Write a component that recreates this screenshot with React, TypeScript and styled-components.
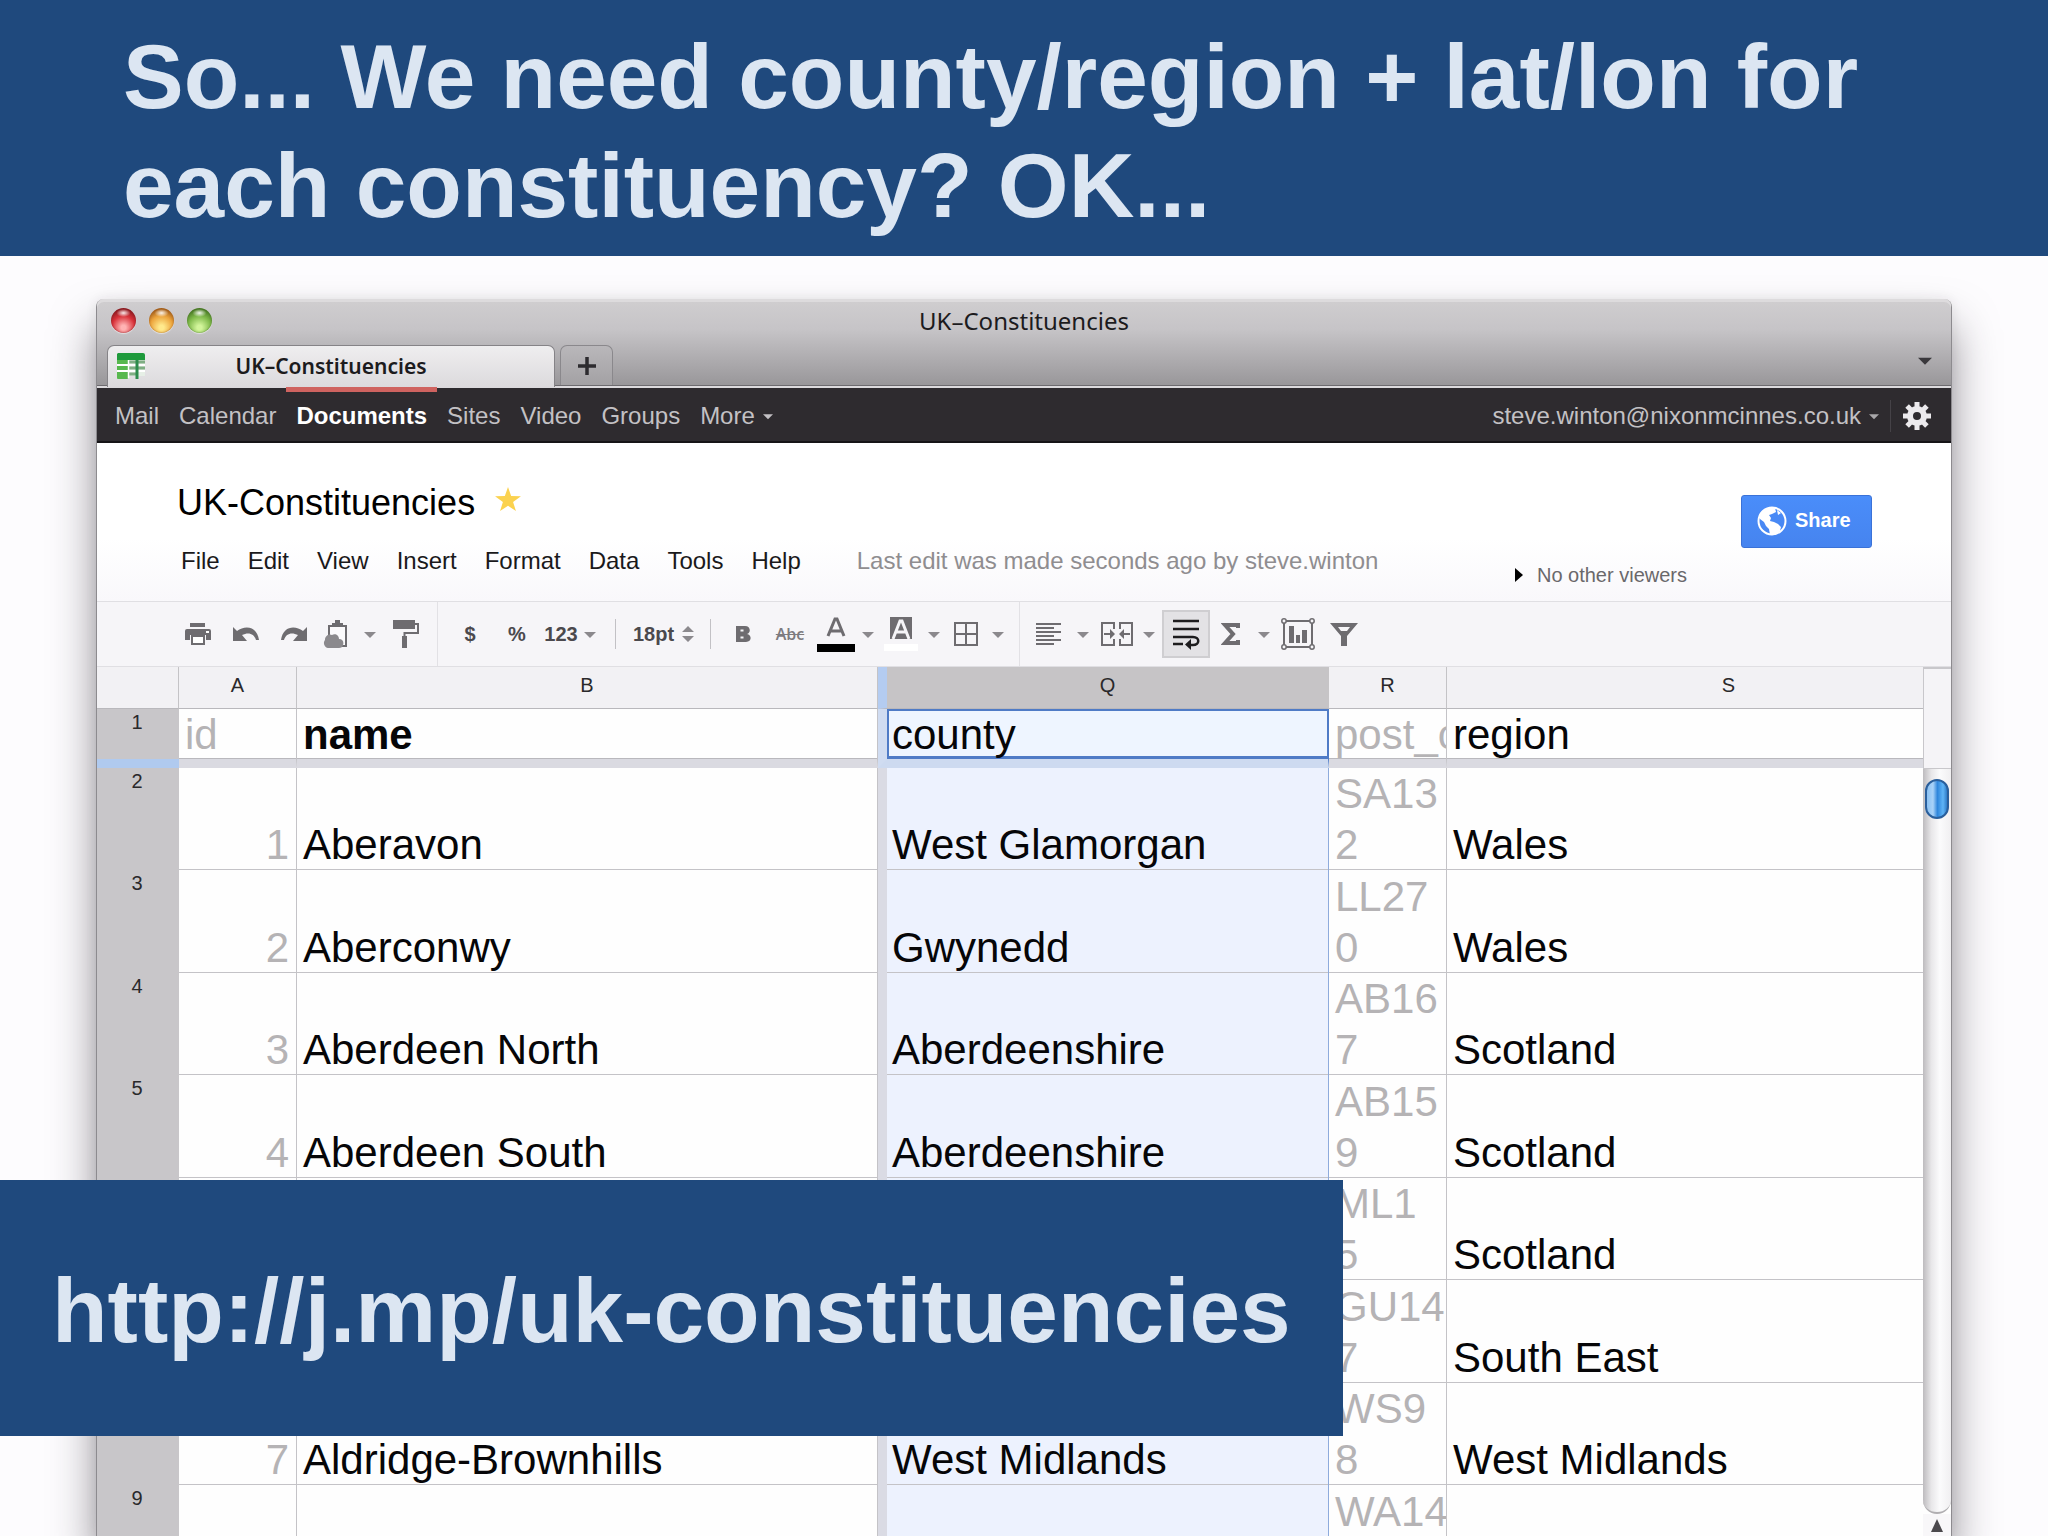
import React from "react";
import styled, { createGlobalStyle, css } from "styled-components";

const GlobalStyle = createGlobalStyle`
  *, *::before, *::after { box-sizing: border-box; }
  body {
    margin: 0;
    background: #fdfcfe;
    font-family: "Liberation Sans", Arial, sans-serif;
    color: #000;
  }
  button, select { font: inherit; color: inherit; border: 0; background: none; padding: 0; }
  h1, h2, p, ul { margin: 0; padding: 0; list-style: none; }
`;

/* ---------- slide ---------- */

const Slide = styled.main`
  position: relative;
  display: flex;
  flex-direction: column;
  height: 100vh;
  overflow: hidden;
`;

const SlideTitle = styled.h1`
  flex: none;
  min-height: 256px;
  padding: 22px 123px 16px;
  background: #1f497d;
  color: #dce6f2;
  font-size: 91px;
  line-height: 109px;
  font-weight: 700;
`;

const LinkBanner = styled.a`
  position: absolute;
  left: 0;
  bottom: 100px;
  height: 256px;
  padding: 76px 52px 0;
  background: #1f497d;
  color: #dce6f2;
  font-size: 91px;
  line-height: 109px;
  font-weight: 700;
  text-decoration: none;
  white-space: nowrap;
`;

/* ---------- browser window ---------- */

const BrowserWindow = styled.section`
  flex: 1;
  min-height: 0;
  display: flex;
  flex-direction: column;
  margin: 43px 96px 0;
  border: solid #8d8b8f;
  border-width: 0 1px;
  border-radius: 8px 8px 0 0;
  background: #fefefe;
  box-shadow: 0 28px 44px rgba(40, 34, 44, 0.5), 0 0 12px rgba(40, 34, 44, 0.08);
`;

const Chrome = styled.div`
  flex: none;
  border-radius: 7px 7px 0 0;
  border-bottom: 2px solid #dcdadd;
  background: linear-gradient(#d0ced0, #c6c4c7 35%, #989699);
  box-shadow: inset 0 3px 0 #dddbdd;
`;

const TitleRow = styled.div`
  display: grid;
  grid-template-columns: 1fr auto 1fr;
  align-items: center;
  height: 46px;
  padding: 0 12px 3px;
`;

const Lights = styled.div`
  display: flex;
  gap: 13px;
  padding-left: 2px;
`;

const Light = styled.button<{ $edge: string; $mid: string; $glow: string }>`
  width: 25px;
  height: 25px;
  border-radius: 50%;
  background:
    radial-gradient(ellipse 7px 4px at 50% 20%, rgba(255, 255, 255, 0.9), rgba(255, 255, 255, 0) 100%),
    radial-gradient(circle at 50% 78%, ${(p) => p.$glow} 10%, ${(p) => p.$mid} 50%, ${(p) => p.$edge} 78%);
  box-shadow: inset 0 0 2px ${(p) => p.$edge}, 0 1px 1px rgba(255, 255, 255, 0.5);
`;

const WindowTitle = styled.span`
  font-family: "Noto Sans", sans-serif;
  font-size: 24px;
  line-height: 28px;
  color: #1c1b1d;
`;

const TabRow = styled.div`
  display: flex;
  gap: 5px;
  height: 41px;
  padding: 0 19px 0 10px;
  border-bottom: 1px solid #6d6b6f;
`;

const Tab = styled.button`
  display: grid;
  grid-template-columns: 1fr auto 1fr;
  align-items: center;
  width: 448px;
  height: 42px;
  padding: 0 8px 2px;
  border: 1px solid #858387;
  border-bottom: 0;
  border-radius: 7px 7px 0 0;
  background: linear-gradient(#efeeef, #dcdadd);
  font-family: "Noto Sans", sans-serif;
  font-size: 21px;
  line-height: 28px;
  font-weight: 600;
  color: #1c1b1d;
`;

const NewTab = styled.button`
  display: grid;
  place-items: center;
  width: 53px;
  border: 1px solid #8a888c;
  border-bottom: 0;
  border-radius: 7px 7px 0 0;
  background: linear-gradient(#b9b7ba, #a3a1a4);
`;

const TabList = styled.button`
  display: flex;
  align-items: center;
  height: 30px;
  margin-left: auto;
`;

/* ---------- account bar ---------- */

const AccountBar = styled.nav`
  flex: none;
  display: flex;
  justify-content: space-between;
  align-items: center;
  height: 55px;
  padding: 2px 19px 0 18px;
  border-bottom: 2px solid #161417;
  background: #2e2b2f;
  font-size: 24px;
  line-height: 28px;
  color: #c3c1c4;
`;

const NavGroup = styled.div`
  display: flex;
  align-items: center;
  gap: 20px;
`;

const NavLink = styled.a<{ $active?: boolean }>`
  position: relative;
  display: flex;
  align-items: center;
  gap: 8px;
  color: inherit;
  text-decoration: none;
  ${(p) =>
    p.$active &&
    css`
      color: #fff;
      font-weight: 700;
      &::before {
        content: "";
        position: absolute;
        top: -15px;
        left: -10px;
        right: -10px;
        height: 5px;
        background: #cf6360;
      }
    `}
`;

const AccountGroup = styled.div`
  display: flex;
  align-items: center;
  gap: 11px;
`;

const BarRule = styled.span`
  width: 1px;
  height: 32px;
  background: #454247;
`;

const IconButton = styled.button`
  display: grid;
  place-items: center;
`;

/* ---------- document header ---------- */

const DocHeader = styled.header`
  flex: none;
  display: flex;
  justify-content: space-between;
  height: 158px;
  padding: 0 79px 0 80px;
  background: linear-gradient(#fff 60%, #f9f8fb);
`;

const DocName = styled.h2`
  display: flex;
  align-items: flex-start;
  gap: 20px;
  padding-top: 39px;
  font-size: 36px;
  line-height: 42px;
  font-weight: 400;
`;

const StarButton = styled(IconButton)`
  height: 35px;
`;

const MenuRow = styled.div`
  display: flex;
  gap: 28px;
  padding: 23px 0 0 4px;
  font-size: 24px;
  line-height: 28px;
  color: #1a191b;
`;

const EditNote = styled.p`
  padding-left: 28px;
  color: #8f8d90;
`;

const ShareArea = styled.div`
  display: flex;
  align-items: flex-start;
  gap: 54px;
`;

const Viewers = styled.button`
  display: flex;
  align-items: center;
  gap: 14px;
  margin-top: 120px;
  font-size: 20px;
  line-height: 24px;
  color: #6a686b;
`;

const ShareButton = styled.button`
  display: flex;
  align-items: center;
  gap: 8px;
  width: 131px;
  height: 53px;
  margin-top: 52px;
  padding: 0 15px 2px;
  border: 1px solid #3a72d8;
  border-radius: 3px;
  background: linear-gradient(#4a8dfa, #4684ef);
  color: #fff;
  font-size: 20px;
  font-weight: 700;
`;

/* ---------- toolbar ---------- */

const Toolbar = styled.div`
  flex: none;
  display: flex;
  align-items: center;
  height: 66px;
  padding-left: 77px;
  border: solid #e0dfe3;
  border-width: 1px 0;
  background: #f6f5f8;
  color: #6e6c70;
`;

const Tool = styled.button<{ $w: number; $on?: boolean }>`
  display: grid;
  place-items: center;
  width: ${(p) => p.$w}px;
  height: 48px;
  font-size: 20px;
  font-weight: 700;
  color: #4b494d;
  svg { color: #6e6c70; }
  ${(p) =>
    p.$on &&
    css`
      border: 2px solid #cfced1;
      background: #e3e2e5;
    `}
`;

const ToolRule = styled.span<{ $w: number; $tall?: boolean }>`
  display: flex;
  justify-content: center;
  width: ${(p) => p.$w}px;
  &::before {
    content: "";
    width: 1px;
    height: ${(p) => (p.$tall ? 64 : 30)}px;
    background: ${(p) => (p.$tall ? "#e2e1e5" : "#c2c1c5")};
  }
`;

const SizeField = styled.label`
  display: flex;
  align-items: center;
  justify-content: space-between;
  width: 70px;
  padding: 0 6px 0 3px;
`;

const SizeSelect = styled.select`
  appearance: none;
  width: 46px;
  font-size: 20px;
  font-weight: 700;
  color: #4b494d;
`;

const Strike = styled.s`
  font-family: "Open Sans", sans-serif;
  font-size: 16px;
  font-weight: 600;
  color: #7d7b7f;
`;

/* ---------- spreadsheet ---------- */

const SheetArea = styled.div`
  flex: 1;
  min-height: 0;
  display: flex;
  overflow: hidden;
`;

const SheetScroll = styled.div`
  flex: 1;
  min-width: 0;
  overflow: hidden;
`;

/* The last column runs on past the right edge of the scroll area. */
const Sheet = styled.table`
  width: calc(100% + 88px);
  table-layout: fixed;
  border-collapse: separate;
  border-spacing: 0;
  font-size: 42px;
  line-height: 51px;
`;

const Col = styled.col<{ $w?: number }>`
  width: ${(p) => (p.$w ? `${p.$w}px` : "auto")};
`;

const ColumnHead = styled.th<{ $selected?: boolean }>`
  height: 42px;
  padding: 0 0 6px;
  border-right: 1px solid #c4c3c6;
  border-bottom: 1px solid #b9b8bc;
  background: ${(p) => (p.$selected ? "#c6c4c6" : "#f2f1f4")};
  font-size: 20px;
  line-height: 24px;
  font-weight: 400;
  color: #2a292b;
  ${(p) =>
    p.$selected &&
    css`
      border-left: 9px solid #b4ccf1;
      border-right-color: #c6c4c6;
    `}
`;

const RowHead = styled.th<{ $frozen?: boolean }>`
  padding: 1px 2px 0 0;
  border-bottom: ${(p) => (p.$frozen ? "9px solid #b0caef" : "0")};
  background: #c8c6c9;
  vertical-align: top;
  font-size: 20px;
  line-height: 24px;
  font-weight: 400;
  color: #2a292b;
`;

const Cell = styled.td<{ $muted?: boolean; $end?: boolean; $county?: boolean; $wrap?: boolean }>`
  padding: 0 0 0 6px;
  border-right: 1px solid #c4c3c7;
  box-shadow: inset 0 -1px 0 #c4c3c7;
  vertical-align: bottom;
  overflow: hidden;
  white-space: ${(p) => (p.$wrap ? "pre-line" : "nowrap")};
  color: ${(p) => (p.$muted ? "#b5b3b5" : "#060608")};
  ${(p) =>
    p.$end &&
    css`
      padding-right: 7px;
      text-align: right;
    `}
  ${(p) =>
    p.$county &&
    css`
      padding-left: 5px;
      border-left: 9px solid #dadbe4;
      border-right-color: #8eabdc;
      background: #edf2fe;
    `}
`;

const FrozenCell = styled(Cell)<{ $bold?: boolean; $active?: boolean }>`
  border-bottom: 9px solid #dadae1;
  box-shadow: inset 0 -1px 0 #b9b8bd;
  line-height: 49px;
  font-weight: ${(p) => (p.$bold ? 700 : 400)};
  ${(p) =>
    p.$active &&
    css`
      border-left-color: #d0dcf1;
      border-right-color: #4f7bc6;
      border-bottom-color: #cddaf0;
      background: #eef5ff;
      box-shadow: inset 2px 2px 0 #4f7bc6, inset -1px -3px 0 #4f7bc6;
    `}
`;

const FrozenRow = styled.tr`
  height: 59px;
`;

const Row = styled.tr`
  height: 103px;
  &:nth-child(even) {
    height: 102px;
  }
`;

/* ---------- scrollbar ---------- */

const ScrollColumn = styled.div`
  flex: none;
  display: flex;
  flex-direction: column;
  width: 28px;
`;

const ScrollCorner = styled.div`
  height: 102px;
  border: solid #c8c7cb;
  border-width: 2px 0 1px 1px;
  background: #f5f4f7;
`;

const Track = styled.div`
  flex: 1;
  padding: 10px 2px;
  border-radius: 0 0 14px 14px;
  border-bottom: 2px solid #b0aeb1;
  background: linear-gradient(90deg, #bdbbbe, #e8e7e9 30%, #fbfbfc 60%, #f0eff1);
`;

const Thumb = styled.div`
  height: 40px;
  border: 2px solid #2a5f9c;
  border-radius: 12px;
  background: linear-gradient(90deg, #8cc2f3, #a9d2f8 30%, #2f86dc 52%, #5fb4f6 80%, #2f7cc8);
`;

const ScrollUp = styled.button`
  display: grid;
  place-items: center;
  height: 22px;
  background: #f8f7f9;
`;

/* ---------- drawings ---------- */

const Caret = ({ color = "#8b898d", size = 12 }: { color?: string; size?: number }) => (
  <svg width={size} height={size} viewBox="0 0 12 12" aria-hidden="true">
    <path d="M0 4h12L6 10z" fill={color} />
  </svg>
);

const Favicon = () => (
  <svg width="30" height="28" viewBox="0 0 30 28" aria-hidden="true">
    <rect x="1" y="7" width="28" height="17" fill="#e6efe6" />
    <path d="M2 1h25a2 2 0 0 1 2 2v5H1V2z" fill="#1f9a3c" />
    <path d="M1 8h11v18a1 1 0 0 1-1 1H2a1 1 0 0 1-1-1z" fill="#58b84f" />
    <path d="M1 13h28M1 19h28" stroke="#fff" strokeWidth="2" />
    <path d="M13 10h7M22 10h7M13 16h7M22 16h7M13 22h7" stroke="#7fae84" strokeWidth="3" />
    <path d="M21 8v19" stroke="#2c8c4c" strokeWidth="3" />
    <path d="M12.500 8v18" stroke="#fff" strokeWidth="1.500" />
  </svg>
);

const Plus = () => (
  <svg width="20" height="20" viewBox="0 0 20 20" aria-hidden="true">
    <path d="M10 1v18M1 10h18" stroke="#2d2b2f" strokeWidth="3.500" />
  </svg>
);

const Gear = () => (
  <svg width="30" height="30" viewBox="-15 -15 30 30" aria-hidden="true">
    {[0, 45, 90, 135].map((a) => (
      <path key={a} d="M0-14V14" stroke="#eceaed" strokeWidth="5" transform={`rotate(${a})`} />
    ))}
    <circle r="7" fill="#2e2b2f" stroke="#eceaed" strokeWidth="6" />
  </svg>
);

const Star = () => (
  <svg width="26" height="25" viewBox="0 0 28 27" aria-hidden="true">
    <path d="M14 0l3.400 9.800L28 10l-8.500 6.300L22.600 26 14 20.200 5.400 26l3.100-9.700L0 10l10.600-.2z" fill="#fbd24f" />
  </svg>
);

const Globe = () => (
  <svg width="30" height="30" viewBox="0 0 30 30" aria-hidden="true">
    <circle cx="15" cy="15" r="13.500" fill="none" stroke="#fff" strokeWidth="2" />
    <path d="M2 10C4 4 10 1 18 2l1 4-4 2-3 1 2 3-1 3 4 1 4 2 3 3-1 4-5 4-5 0-1-6-3-3-2-4-4-3z" fill="#fff" />
    <path d="M20 4l4 3-3 2z" fill="#fff" />
  </svg>
);

const Printer = () => (
  <svg width="26" height="24" viewBox="0 0 26 24" fill="currentColor" aria-hidden="true">
    <path d="M5 1h15v4H5zM2 7h22a2 2 0 0 1 2 2v9h-5v-5H5v5H0V9a2 2 0 0 1 2-2z" />
    <path d="M7 14h12v8H7z" fill="#fff" stroke="currentColor" strokeWidth="2" />
    <path d="M21 9h3v2h-3z" fill="#fff" />
  </svg>
);

const Undo = () => (
  <svg width="28" height="16" viewBox="0 0 28 16" fill="currentColor" aria-hidden="true">
    <path d="M1 1l4 4c8-6 20-5 22 9h-3C22 7 16 6 10 9l5 6H1z" />
  </svg>
);

const Redo = () => (
  <svg width="28" height="16" viewBox="0 0 28 16" fill="currentColor" aria-hidden="true">
    <path d="M27 1l-4 4C15-1 3 0 1 14h3C6 7 12 6 18 9l-5 6h14z" />
  </svg>
);

const Paste = () => (
  <svg width="26" height="30" viewBox="0 0 26 30" aria-hidden="true">
    <path d="M6 7h17v20H6z" fill="#fbfafc" stroke="currentColor" strokeWidth="2" />
    <path d="M9 4h3V1h5v3h3v4H9z" fill="currentColor" />
    <path d="M5 29a5 5 0 0 1-3-8 5 5 0 0 1 7-5c3-2 7 0 7 4 4 0 5 3 4 6 0 2-2 3-4 3z" fill="#8b898d" />
  </svg>
);

const Roller = () => (
  <svg width="28" height="30" viewBox="0 0 28 30" aria-hidden="true">
    <path d="M1 1h22v9H1zM10 17h5v12h-5z" fill="currentColor" />
    <path d="M23 5h3v9H12.500v4" fill="none" stroke="currentColor" strokeWidth="2" />
  </svg>
);

const Spinner = () => (
  <svg width="12" height="18" viewBox="0 0 12 18" aria-hidden="true">
    <path d="M0 7l6-6 6 6zM0 11h12l-6 6z" fill="#8b898d" />
  </svg>
);

const BoldIcon = () => (
  <svg width="16" height="18" viewBox="0 0 16 18" aria-hidden="true">
    <path d="M1 1h9c6 0 6 7 2 8 5 1 5 8-1 8H1z" fill="currentColor" />
    <path d="M7 4.500v2M7 11.500v2" stroke="#f6f5f8" strokeWidth="3" />
  </svg>
);

const TextColour = () => (
  <svg width="40" height="36" viewBox="0 0 40 36" aria-hidden="true">
    <path d="M12 20l7-17h2l7 17M14 15h12" fill="none" stroke="currentColor" strokeWidth="3" />
    <path d="M1 28h38v8H1z" fill="#000" />
  </svg>
);

const FillColour = () => (
  <svg width="36" height="36" viewBox="0 0 36 36" aria-hidden="true">
    <path d="M7 1h22v22H7z" fill="currentColor" />
    <path d="M10 23l7-18h2l7 18M13 16h10" fill="none" stroke="#f6f5f8" strokeWidth="3" />
    <path d="M1 28h34v7H1z" fill="#fff" />
  </svg>
);

const Borders = () => (
  <svg width="26" height="26" viewBox="0 0 26 26" aria-hidden="true">
    <path d="M2 2h22v22H2zM13 2v22M2 13h22" fill="none" stroke="currentColor" strokeWidth="2" />
  </svg>
);

const Align = () => (
  <svg width="28" height="24" viewBox="0 0 28 24" aria-hidden="true">
    <path d="M1 2h25M1 6h18M1 10h25M1 14h18M1 18h25M1 22h18" stroke="currentColor" strokeWidth="2" />
  </svg>
);

const Merge = () => (
  <svg width="34" height="26" viewBox="0 0 34 26" aria-hidden="true">
    <path d="M14 8V2H2v22h12v-6M20 8V2h12v22H20v-6" fill="none" stroke="currentColor" strokeWidth="2" />
    <path d="M4 13h7M30 13h-7" stroke="currentColor" strokeWidth="2" />
    <path d="M10 8l5 5-5 5zM24 8l-5 5 5 5z" fill="currentColor" />
  </svg>
);

const Wrap = () => (
  <svg width="30" height="32" viewBox="0 0 30 32" aria-hidden="true">
    <path d="M2 3h26M2 11h26M2 19h20c7 0 7 8 0 8h-3M2 26h10" fill="none" stroke="#1d1c1e" strokeWidth="2.500" />
    <path d="M20 21v11l-6-5.500z" fill="#1d1c1e" />
  </svg>
);

const Sigma = () => (
  <svg width="20" height="24" viewBox="0 0 20 24" aria-hidden="true">
    <path d="M17 6V3H4l8 9-8 9h13v-3" fill="none" stroke="currentColor" strokeWidth="4" />
  </svg>
);

const Chart = () => (
  <svg width="36" height="32" viewBox="0 0 36 32" aria-hidden="true">
    <path d="M4 3h28v26H4z" fill="none" stroke="currentColor" strokeWidth="2" />
    <path d="M9 8h5v17H9zM16 17h4v8h-4zM22 12h5v13h-5z" fill="currentColor" />
    {[[4, 3], [32, 3], [4, 29], [32, 29]].map(([x, y]) => (
      <circle key={`${x}-${y}`} cx={x} cy={y} r="2.200" fill="#f6f5f8" stroke="currentColor" strokeWidth="1.500" />
    ))}
  </svg>
);

const Filter = () => (
  <svg width="28" height="24" viewBox="0 0 28 24" aria-hidden="true">
    <path d="M0 1h28L17 14v10h-6V14zM8 5l3 4h6l3-4z" fill="currentColor" fillRule="evenodd" />
  </svg>
);

/* ---------- content ---------- */

const menus = ["File", "Edit", "View", "Insert", "Format", "Data", "Tools", "Help"];

const rows = [
  ["Aberavon", "West Glamorgan", "SA13\n2", "Wales"],
  ["Aberconwy", "Gwynedd", "LL27\n0", "Wales"],
  ["Aberdeen North", "Aberdeenshire", "AB16\n7", "Scotland"],
  ["Aberdeen South", "Aberdeenshire", "AB15\n9", "Scotland"],
  ["", "", "ML1\n5", "Scotland"],
  ["", "", "GU14\n7", "South East"],
  ["Aldridge-Brownhills", "West Midlands", "WS9\n8", "West Midlands"],
  ["", "", "WA14\n\u00a0", ""],
];

const Menu = ({ label, w }: { label: string; w: number }) => (
  <Tool $w={w} aria-label={label}>
    <Caret />
  </Tool>
);

export default function App() {
  return (
    <Slide>
      <GlobalStyle />
      <SlideTitle>So... We need county/region + lat/lon for each constituency? OK...</SlideTitle>

      <BrowserWindow>
        <Chrome>
          <TitleRow>
            <Lights>
              <Light aria-label="Close" $edge="#8e1c22" $mid="#d8323a" $glow="#ffb3b3" />
              <Light aria-label="Minimise" $edge="#a5601c" $mid="#eca43c" $glow="#ffe98c" />
              <Light aria-label="Zoom" $edge="#4a7a26" $mid="#7fb94a" $glow="#d2f59a" />
            </Lights>
            <WindowTitle>UK–Constituencies</WindowTitle>
          </TitleRow>
          <TabRow>
            <Tab>
              <Favicon />
              <span>UK–Constituencies</span>
            </Tab>
            <NewTab aria-label="New tab">
              <Plus />
            </NewTab>
            <TabList aria-label="List all tabs">
              <Caret color="#3a383c" size={14} />
            </TabList>
          </TabRow>
        </Chrome>

        <AccountBar>
          <NavGroup>
            <NavLink href="#mail">Mail</NavLink>
            <NavLink href="#calendar">Calendar</NavLink>
            <NavLink href="#documents" $active>Documents</NavLink>
            <NavLink href="#sites">Sites</NavLink>
            <NavLink href="#video">Video</NavLink>
            <NavLink href="#groups">Groups</NavLink>
            <NavLink href="#more">
              More <Caret color="#c3c1c4" size={10} />
            </NavLink>
          </NavGroup>
          <AccountGroup>
            <NavLink href="#account">
              steve.winton@nixonmcinnes.co.uk <Caret color="#a9a7aa" size={10} />
            </NavLink>
            <BarRule />
            <IconButton aria-label="Settings">
              <Gear />
            </IconButton>
          </AccountGroup>
        </AccountBar>

        <DocHeader>
          <div>
            <DocName>
              UK-Constituencies
              <StarButton aria-label="Starred">
                <Star />
              </StarButton>
            </DocName>
            <MenuRow>
              {menus.map((m) => (
                <button key={m}>{m}</button>
              ))}
              <EditNote>Last edit was made seconds ago by steve.winton</EditNote>
            </MenuRow>
          </div>
          <ShareArea>
            <Viewers>
              <svg width="8" height="14" viewBox="0 0 8 14" aria-hidden="true">
                <path d="M0 0l8 7-8 7z" fill="#000" />
              </svg>
              No other viewers
            </Viewers>
            <ShareButton>
              <Globe />
              Share
            </ShareButton>
          </ShareArea>
        </DocHeader>

        <Toolbar>
          <Tool $w={48} aria-label="Print"><Printer /></Tool>
          <Tool $w={48} aria-label="Undo"><Undo /></Tool>
          <Tool $w={48} aria-label="Redo"><Redo /></Tool>
          <Tool $w={36} aria-label="Paste"><Paste /></Tool>
          <Menu w={32} label="Paste options" />
          <Tool $w={40} aria-label="Paint format"><Roller /></Tool>
          <ToolRule $w={22} $tall />
          <Tool $w={44}>$</Tool>
          <Tool $w={50}>%</Tool>
          <Tool $w={38}>123</Tool>
          <Menu w={20} label="More formats" />
          <ToolRule $w={30} />
          <SizeField>
            <SizeSelect aria-label="Font size" defaultValue="18pt">
              <option>18pt</option>
            </SizeSelect>
            <Spinner />
          </SizeField>
          <ToolRule $w={20} />
          <Tool $w={46} aria-label="Bold"><BoldIcon /></Tool>
          <Tool $w={48} aria-label="Strikethrough"><Strike>Abc</Strike></Tool>
          <Tool $w={44} aria-label="Text colour"><TextColour /></Tool>
          <Menu w={20} label="Text colours" />
          <Tool $w={46} aria-label="Background colour"><FillColour /></Tool>
          <Menu w={20} label="Background colours" />
          <Tool $w={44} aria-label="Borders"><Borders /></Tool>
          <Menu w={20} label="Border styles" />
          <ToolRule $w={22} $tall />
          <Tool $w={38} aria-label="Align"><Align /></Tool>
          <Menu w={30} label="Align options" />
          <Tool $w={38} aria-label="Merge cells"><Merge /></Tool>
          <Menu w={26} label="Merge options" />
          <Tool $w={48} $on aria-label="Wrap text"><Wrap /></Tool>
          <Tool $w={42} aria-label="Functions"><Sigma /></Tool>
          <Menu w={24} label="More functions" />
          <Tool $w={44} aria-label="Insert chart"><Chart /></Tool>
          <Tool $w={48} aria-label="Filter"><Filter /></Tool>
        </Toolbar>

        <SheetArea>
          <SheetScroll>
            <Sheet>
              <colgroup>
                <Col $w={82} />
                <Col $w={118} />
                <Col $w={581} />
                <Col $w={451} />
                <Col $w={118} />
                <Col />
              </colgroup>
              <thead>
                <tr>
                  <ColumnHead aria-label="Row" />
                  <ColumnHead>A</ColumnHead>
                  <ColumnHead>B</ColumnHead>
                  <ColumnHead $selected>Q</ColumnHead>
                  <ColumnHead>R</ColumnHead>
                  <ColumnHead>S</ColumnHead>
                </tr>
              </thead>
              <tbody>
                <FrozenRow>
                  <RowHead $frozen>1</RowHead>
                  <FrozenCell $muted>id</FrozenCell>
                  <FrozenCell $bold>name</FrozenCell>
                  <FrozenCell $county $active>county</FrozenCell>
                  <FrozenCell $muted>post_code</FrozenCell>
                  <FrozenCell>region</FrozenCell>
                </FrozenRow>
                {rows.map(([name, county, postcode, region], i) => (
                  <Row key={i}>
                    <RowHead>{i + 2}</RowHead>
                    <Cell $muted $end>{i + 1}</Cell>
                    <Cell>{name}</Cell>
                    <Cell $county>{county}</Cell>
                    <Cell $muted $wrap>{postcode}</Cell>
                    <Cell>{region}</Cell>
                  </Row>
                ))}
              </tbody>
            </Sheet>
          </SheetScroll>
          <ScrollColumn>
            <ScrollCorner />
            <Track>
              <Thumb />
            </Track>
            <ScrollUp aria-label="Scroll up">
              <svg width="12" height="13" viewBox="0 0 12 13" aria-hidden="true">
                <path d="M6 0l6 13H0z" fill="#4b494d" />
              </svg>
            </ScrollUp>
          </ScrollColumn>
        </SheetArea>
      </BrowserWindow>

      <LinkBanner href="http://j.mp/uk-constituencies">http://j.mp/uk-constituencies</LinkBanner>
    </Slide>
  );
}
